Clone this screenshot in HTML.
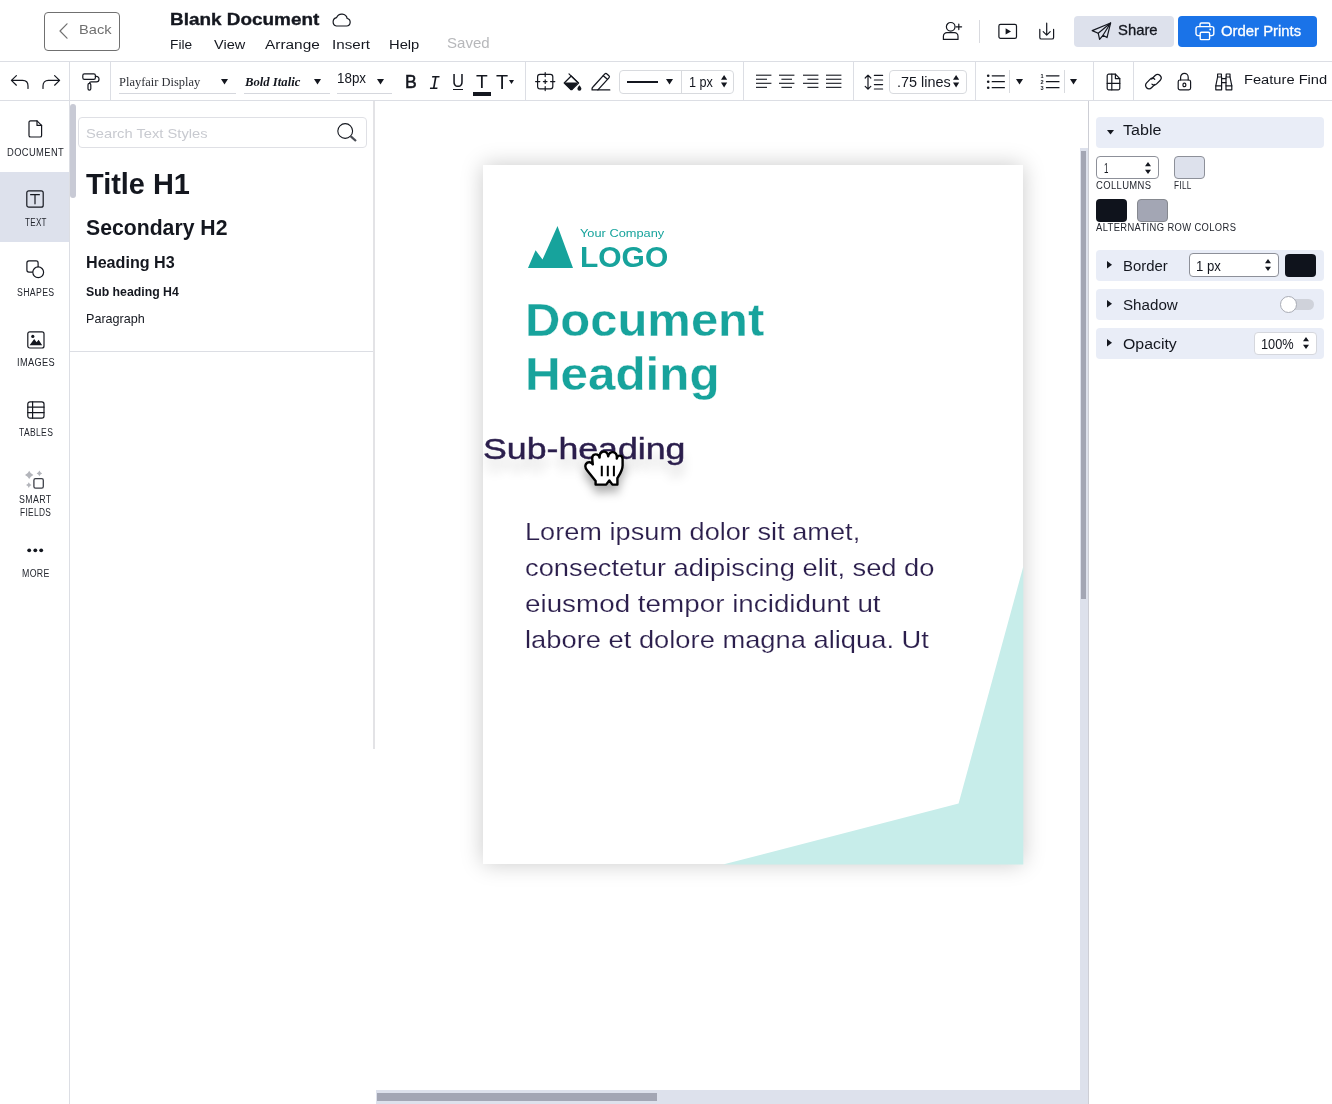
<!DOCTYPE html>
<html lang="en"><head><meta charset="utf-8"><title>Blank Document</title>
<style>
*{box-sizing:border-box;margin:0;padding:0}
html,body{width:1332px;height:1104px;overflow:hidden;background:#fff}
body{position:relative;font-family:"Liberation Sans",sans-serif;color:#14171f}
.t{position:absolute;white-space:nowrap;line-height:1;transform-origin:0 0;display:block}
#w{position:absolute;left:0;top:0;width:1332px;height:1104px;will-change:transform}
.a{position:absolute}
.ln{position:absolute;background:#dcdee4}
svg{position:absolute;overflow:visible}
.s{fill:none;stroke:#14171f;stroke-width:1.2;stroke-linecap:round;stroke-linejoin:round}
.f{fill:#14171f;stroke:none}
</style></head>
<body>
<div id="w">
<div class="ln" style="left:0px;top:61px;width:1332px;height:1px;background:#dcdee4"></div>
<div class="a" style="left:44px;top:12px;width:76px;height:39px;border:1px solid #707070;border-radius:4px"></div>
<svg style="left:59px;top:23px" width="9" height="16" viewBox="0 0 9 16"><path d="M8 0.8L1 8L8 15.2" fill="none" stroke="#707070" stroke-width="1.2" stroke-linecap="round" stroke-linejoin="round"/></svg>
<span class="t" id="t0" style='top:23px;font-size:13.2px;color:#707070;left:79.45px;transform:scaleX(1.1115);'>Back</span>
<span class="t" id="t1" style='top:11px;font-size:17px;color:#14171f;font-weight:700;left:169.82px;transform:scaleX(1.1129);-webkit-text-stroke:.35px #14171f;'>Blank Document</span>
<svg style="left:331.2px;top:12.4px" width="21" height="15" viewBox="0 0 21 15"><path class="s" d="M5.4 14H15.6A3.8 3.8 0 0 0 16.2 6.5A5.6 5.6 0 0 0 5.6 5.6A4.3 4.3 0 0 0 5.4 14Z" stroke-width="1.1"/></svg>
<span class="t" id="t2" style='top:38px;font-size:13.7px;color:#14171f;left:169.93px;transform:scaleX(1.0025);'>File</span>
<span class="t" id="t3" style='top:38px;font-size:13.7px;color:#14171f;left:214.00px;transform:scaleX(1.0603);'>View</span>
<span class="t" id="t4" style='top:38px;font-size:13.7px;color:#14171f;left:264.50px;transform:scaleX(1.1249);'>Arrange</span>
<span class="t" id="t5" style='top:38px;font-size:13.7px;color:#14171f;left:331.82px;transform:scaleX(1.1071);'>Insert</span>
<span class="t" id="t6" style='top:38px;font-size:13.7px;color:#14171f;left:388.85px;transform:scaleX(1.0772);'>Help</span>
<span class="t" id="t7" style='top:36px;font-size:14.2px;color:#b7b8bb;left:447.43px;transform:scaleX(1.0609);'>Saved</span>
<div class="ln" style="left:979px;top:20px;width:1px;height:23px;background:#d9dadf"></div>
<div class="a" style="left:1074px;top:16px;width:100px;height:31px;background:#dde1ec;border-radius:4px"></div>
<span class="t" id="t8" style='top:23px;font-size:14.5px;color:#14171f;left:1118.34px;transform:scaleX(1.0225);-webkit-text-stroke:.3px #14171f;'>Share</span>
<div class="a" style="left:1178px;top:16px;width:139px;height:31px;background:#1a73e8;border-radius:4px"></div>
<span class="t" id="t9" style='top:24px;font-size:14.5px;color:#fff;left:1221.40px;transform:scaleX(1.0257);-webkit-text-stroke:.3px #fff;'>Order Prints</span>
<svg style="left:942px;top:21px;" width="20" height="20" viewBox="0 0 20 20"><circle class="s" cx="8.7" cy="5.8" r="4.3"/><path class="s" d="M1.4 18.4V15.2A3.6 3.6 0 0 1 5 11.6H12.4A3.6 3.6 0 0 1 16 15.2V18.4Z"/><path class="s" d="M14 5.8H19.6M16.8 3V8.6" stroke-width="1.1"/></svg>
<svg style="left:998px;top:23px;" width="20" height="17" viewBox="0 0 20 17"><rect class="s" x="0.9" y="1.3" width="17.6" height="14" rx="1.6"/><path class="f" d="M7.6 5.3L13 8.4L7.6 11.6Z"/></svg>
<svg style="left:1038px;top:22px;" width="18" height="19" viewBox="0 0 18 19"><path class="s" d="M1.8 7.4V15.4A1.6 1.6 0 0 0 3.4 17H14A1.6 1.6 0 0 0 15.6 15.4V7.4"/><path class="s" d="M8.7 1.2V13M5.2 9.6L8.7 13.1L12.2 9.6" stroke-width="1.1"/></svg>
<svg style="left:1091px;top:22px;" width="21" height="19" viewBox="0 0 21 19"><path class="s" d="M19.6 1L1.2 8.6L7.2 11.2L8.6 17.4L12 13.3L16 15.6Z" stroke-width="1.2"/><path class="s" d="M19.6 1L7.2 11.2M19.6 1L12 13.3" stroke-width="1.1"/></svg>
<svg style="left:1195px;top:22px;" width="20" height="19" viewBox="0 0 20 19"><g fill="none" stroke="#fff" stroke-width="1.4" stroke-linejoin="round" stroke-linecap="round"><path d="M5 4.6V2.4A1.4 1.4 0 0 1 6.4 1H13.4A1.4 1.4 0 0 1 14.8 2.4V4.6"/><rect x="1" y="4.6" width="17.8" height="9" rx="2"/><rect x="5.2" y="10.2" width="9.4" height="7.4" rx="1.2" fill="#1a73e8"/></g><circle cx="15.2" cy="7.5" r="0.9" fill="#fff"/></svg>
<div class="ln" style="left:0px;top:100px;width:1332px;height:1px;background:#dcdee4"></div>
<div class="ln" style="left:69px;top:62px;width:1px;height:38px;background:#dcdee4"></div>
<div class="ln" style="left:110px;top:62px;width:1px;height:38px;background:#dcdee4"></div>
<div class="ln" style="left:525px;top:62px;width:1px;height:38px;background:#dcdee4"></div>
<div class="ln" style="left:743px;top:62px;width:1px;height:38px;background:#dcdee4"></div>
<div class="ln" style="left:853px;top:62px;width:1px;height:38px;background:#dcdee4"></div>
<div class="ln" style="left:975px;top:62px;width:1px;height:38px;background:#dcdee4"></div>
<div class="ln" style="left:1093px;top:62px;width:1px;height:38px;background:#dcdee4"></div>
<div class="ln" style="left:1133px;top:62px;width:1px;height:38px;background:#dcdee4"></div>
<svg style="left:10px;top:74px;" width="20" height="16" viewBox="0 0 20 16"><path class="s" d="M6.4 1.6L1.4 6.4L6.4 11.2M1.6 6.4H12.6C16 6.4 18 8.8 18 12V14.4" stroke-width="1.2"/></svg>
<svg style="left:41px;top:74px;" width="20" height="16" viewBox="0 0 20 16"><path class="s" d="M13.6 1.6L18.6 6.4L13.6 11.2M18.4 6.4H7.4C4 6.4 2 8.8 2 12V14.4" stroke-width="1.2"/></svg>
<svg style="left:82px;top:73px;" width="18" height="18" viewBox="0 0 18 18"><rect class="s" x="0.8" y="0.8" width="12.6" height="5.6" rx="1.6"/><path class="s" d="M13.4 3.4H14.4A2.6 2.6 0 0 1 17 6V6.2A2.6 2.6 0 0 1 14.4 8.8H9.2A1.8 1.8 0 0 0 7.4 10.4"/><rect class="s" x="6" y="10.4" width="2.8" height="6.8" rx="1.4"/></svg>
<svg style="left:535px;top:71.9px;" width="20" height="19" viewBox="0 0 20 19"><rect class="s" x="2.6" y="2.4" width="15.2" height="14.4" rx="2.4" stroke-width="1.2"/><path class="s" d="M10.2 0.6V4.6M10.2 14.6V18.6M0.6 9.6H4.8M15.6 9.6H19.8M8.4 9.6H12M10.2 7.8V11.4" stroke-width="1.1"/></svg>
<svg style="left:562.8px;top:72.6px;" width="19" height="18" viewBox="0 0 19 18"><path class="s" d="M6 0.8L14.6 9.4" stroke-width="1.2"/><path class="s" d="M8.2 3L1.2 10L7.4 16.2Q8.4 17 9.4 16.2L15.6 10Z" stroke-width="1.2"/><path class="f" d="M1.2 9.4H15.4L9.4 16.2Q8.4 17 7.4 16.2L1.2 10Z"/><path class="f" d="M16.4 12.2C17.6 13.8 18.4 14.8 18.4 15.8A2 2 0 0 1 14.4 15.8C14.4 14.8 15.2 13.8 16.4 12.2Z"/></svg>
<svg style="left:590.8px;top:72.4px;" width="20.5" height="19.4" viewBox="0 0 19 18"><path class="s" d="M2.4 13.2L12.8 1.8Q13.8 0.8 14.8 1.8L16.6 3.4Q17.6 4.4 16.6 5.4L6.4 16.6H1V15Z" stroke-width="1.2"/><path class="s" d="M11.4 3.4L15.2 6.8" stroke-width="1.1"/><path class="s" d="M6.4 16.6H17.4" stroke-width="1.2"/></svg>
<svg style="left:756px;top:74px;" width="16" height="15" viewBox="0 0 16 15"><path d="M0 1.2H15.4" stroke="#14171f" stroke-width="1.1" fill="none"/><path d="M0 5.25H11" stroke="#14171f" stroke-width="1.1" fill="none"/><path d="M0 9.299999999999999H15.4" stroke="#14171f" stroke-width="1.1" fill="none"/><path d="M0 13.349999999999998H11" stroke="#14171f" stroke-width="1.1" fill="none"/></svg>
<svg style="left:779.3px;top:74px;" width="16" height="15" viewBox="0 0 16 15"><path d="M0 1.2H15.4" stroke="#14171f" stroke-width="1.1" fill="none"/><path d="M2.4 5.25H13" stroke="#14171f" stroke-width="1.1" fill="none"/><path d="M0 9.299999999999999H15.4" stroke="#14171f" stroke-width="1.1" fill="none"/><path d="M2.4 13.349999999999998H13" stroke="#14171f" stroke-width="1.1" fill="none"/></svg>
<svg style="left:802.5px;top:74px;" width="16" height="15" viewBox="0 0 16 15"><path d="M0 1.2H15.4" stroke="#14171f" stroke-width="1.1" fill="none"/><path d="M4.4 5.25H15.4" stroke="#14171f" stroke-width="1.1" fill="none"/><path d="M0 9.299999999999999H15.4" stroke="#14171f" stroke-width="1.1" fill="none"/><path d="M4.4 13.349999999999998H15.4" stroke="#14171f" stroke-width="1.1" fill="none"/></svg>
<svg style="left:826px;top:74px;" width="16" height="15" viewBox="0 0 16 15"><path d="M0 1.2H15.4" stroke="#14171f" stroke-width="1.1" fill="none"/><path d="M0 5.25H15.4" stroke="#14171f" stroke-width="1.1" fill="none"/><path d="M0 9.299999999999999H15.4" stroke="#14171f" stroke-width="1.1" fill="none"/><path d="M0 13.349999999999998H15.4" stroke="#14171f" stroke-width="1.1" fill="none"/></svg>
<svg style="left:864px;top:74px;" width="20" height="17" viewBox="0 0 20 17"><path class="s" d="M4 1.2V15.2M1.2 4L4 1.2L6.8 4M1.2 12.4L4 15.2L6.8 12.4" stroke-width="1.1"/><path class="s" d="M10.4 1.4H18.6M10.4 6H18.6M10.4 10.6H18.6M10.4 15H18.6" stroke-width="1.1"/></svg>
<svg style="left:986px;top:73px;" width="19" height="17" viewBox="0 0 19 17"><circle class="f" cx="2.2" cy="2.8" r="1.3"/><circle class="f" cx="2.2" cy="8.7" r="1.3"/><circle class="f" cx="2.2" cy="14.7" r="1.3"/><path class="s" d="M6.2 2.8H18.4M6.2 8.7H18.4M6.2 14.7H18.4" stroke-width="1.1"/></svg>
<svg style="left:1040px;top:73px;" width="20" height="17" viewBox="0 0 20 17"><text x="0.6" y="4.8" font-size="5.6" font-weight="700" font-family="Liberation Sans, sans-serif" fill="#14171f">1</text><text x="0.6" y="10.7" font-size="5.6" font-weight="700" font-family="Liberation Sans, sans-serif" fill="#14171f">2</text><text x="0.6" y="16.7" font-size="5.6" font-weight="700" font-family="Liberation Sans, sans-serif" fill="#14171f">3</text><path class="s" d="M6.4 2.8H19M6.4 8.7H19M6.4 14.7H19" stroke-width="1.1"/></svg>
<svg style="left:1106px;top:73px;" width="16" height="18" viewBox="0 0 16 18"><path class="s" d="M2.8 1.2H9.4L13.8 5.6V15.2A1.6 1.6 0 0 1 12.2 16.8H2.8A1.6 1.6 0 0 1 1.2 15.2V2.8A1.6 1.6 0 0 1 2.8 1.2Z" stroke-width="1.2"/><path class="s" d="M9.4 1.2V5.6H13.8M5.8 1.2V16.8M1.2 10.4H13.8" stroke-width="1.1"/></svg>
<svg style="left:1144.4px;top:73.3px;" width="19.3" height="18.2" viewBox="0 0 18 17"><g class="s" stroke-width="1.2"><path d="M7.2 5.6L10.4 2.4A3.2 3.2 0 0 1 15 7L11.8 10.2A3.2 3.2 0 0 1 7.4 10.4"/><path d="M10.2 10.6L7 13.8A3.2 3.2 0 0 1 2.4 9.2L5.6 6A3.2 3.2 0 0 1 10 5.8"/></g></svg>
<svg style="left:1176.8px;top:71.7px;" width="15" height="19" viewBox="0 0 15 19"><rect class="s" x="1.2" y="8" width="12.4" height="9.8" rx="1.8" stroke-width="1.2"/><path class="s" d="M3.6 8V5.2A3.8 3.8 0 0 1 11.2 5.2V8" stroke-width="1.2"/><rect class="s" x="6" y="11.2" width="2.8" height="3.4" rx="1.2" stroke-width="1"/></svg>
<svg style="left:1215px;top:73px;" width="18" height="18" viewBox="0 0 18 18"><g class="s" stroke-width="1.2"><path d="M2.6 1H6.4V4H2.6Z M11.2 1H15V4H11.2Z"/><path d="M2.6 4L0.8 12.8V16.8H6.6V4 M15 4L16.8 12.8V16.8H11V4"/><path d="M0.8 12.8H6.6M11 12.8H16.8M6.6 5.6H11M6.6 9.6H11"/></g></svg>
<span class="t" id="t10" style='top:76px;font-size:12.2px;color:#2e3036;font-family:"Liberation Serif", serif;left:118.94px;transform:scaleX(1.0218);'>Playfair Display</span>
<svg style="left:220.6px;top:79.2px" width="7" height="5.5" viewBox="0 0 7 5.5"><path d="M0 0H7L3.5 5.5Z" fill="#14171f"/></svg>
<div class="ln" style="left:119px;top:93px;width:117px;height:1px;background:#d5d7dd"></div>
<span class="t" id="t11" style='top:75px;font-size:13.2px;color:#14171f;font-weight:700;font-family:"Liberation Serif", serif;font-style:italic;left:244.50px;transform:scaleX(0.9620);'>Bold Italic</span>
<svg style="left:314.1px;top:79.2px" width="7" height="5.5" viewBox="0 0 7 5.5"><path d="M0 0H7L3.5 5.5Z" fill="#14171f"/></svg>
<div class="ln" style="left:244px;top:93px;width:86px;height:1px;background:#d5d7dd"></div>
<span class="t" id="t12" style='top:71px;font-size:14px;color:#14171f;left:336.96px;transform:scaleX(0.9565);'>18px</span>
<svg style="left:376.6px;top:79.2px" width="7" height="5.5" viewBox="0 0 7 5.5"><path d="M0 0H7L3.5 5.5Z" fill="#14171f"/></svg>
<div class="ln" style="left:337px;top:93px;width:55px;height:1px;background:#d5d7dd"></div>
<span class="t" id="t13" style='top:73px;font-size:18.4px;color:#14171f;left:405.23px;transform:scaleX(0.9540);-webkit-text-stroke:.55px #14171f;'>B</span>
<span class="t" id="t14" style='top:73px;font-size:21px;color:#14171f;font-family:"Liberation Mono", monospace;font-style:italic;left:429.14px;transform:scaleX(0.8784);'>I</span>
<span class="t" id="t15" style='top:72px;font-size:18.6px;color:#14171f;left:452.16px;transform:scaleX(0.8964);'>U</span>
<div class="ln" style="left:453.2px;top:88.6px;width:9.900000000000034px;height:1.2px;background:#14171f"></div>
<span class="t" id="t16" style='top:72px;font-size:19px;color:#14171f;left:476.00px;transform:scaleX(1.0105);'>T</span>
<div class="ln" style="left:473.1px;top:92px;width:17.599999999999966px;height:3.5px;background:#14171f"></div>
<span class="t" id="t17" style='top:73px;font-size:19.6px;color:#14171f;left:495.99px;transform:scaleX(1.0149);'>T</span>
<svg style="left:509px;top:80.1px" width="5" height="3.9" viewBox="0 0 5 3.9"><path d="M0 0H5L2.5 3.9Z" fill="#14171f"/></svg>
<div class="a" style="left:619.4px;top:70px;width:115px;height:23.5px;border:1px solid #d8dade;border-radius:4px"></div>
<div class="ln" style="left:681px;top:70.5px;width:1px;height:22.5px;background:#d8dade"></div>
<div class="ln" style="left:627px;top:81px;width:31px;height:1.5px;background:#14171f"></div>
<svg style="left:666px;top:79.2px" width="7" height="5.5" viewBox="0 0 7 5.5"><path d="M0 0H7L3.5 5.5Z" fill="#14171f"/></svg>
<span class="t" id="t18" style='top:75px;font-size:14px;color:#14171f;left:688.51px;transform:scaleX(0.9028);'>1 px</span>
<svg style="left:720.6px;top:75.4px" width="6.2" height="12.4" viewBox="0 0 6.2 12.4"><path d="M0 4.8H6.2L3.1 0Z M0 7.6H6.2L3.1 12.4Z" fill="#14171f"/></svg>
<div class="a" style="left:889px;top:70px;width:78px;height:23.5px;border:1px solid #d8dade;border-radius:4px"></div>
<span class="t" id="t19" style='top:75px;font-size:14px;color:#14171f;left:896.67px;transform:scaleX(1.0294);'>.75 lines</span>
<svg style="left:953.2px;top:75.4px" width="6.2" height="12.4" viewBox="0 0 6.2 12.4"><path d="M0 4.8H6.2L3.1 0Z M0 7.6H6.2L3.1 12.4Z" fill="#14171f"/></svg>
<div class="ln" style="left:1009px;top:70px;width:1px;height:23px;background:#d8dade"></div>
<svg style="left:1015.6px;top:79.2px" width="7" height="5.5" viewBox="0 0 7 5.5"><path d="M0 0H7L3.5 5.5Z" fill="#14171f"/></svg>
<div class="ln" style="left:1064px;top:70px;width:1px;height:23px;background:#d8dade"></div>
<svg style="left:1070.1px;top:79.2px" width="7" height="5.5" viewBox="0 0 7 5.5"><path d="M0 0H7L3.5 5.5Z" fill="#14171f"/></svg>
<span class="t" id="t20" style='top:73px;font-size:13.7px;color:#14171f;left:1243.65px;transform:scaleX(1.0721);'>Feature Find</span>
<div class="ln" style="left:69px;top:101px;width:1px;height:1003px;background:#dcdee4"></div>
<div class="a" style="left:0px;top:172px;width:69px;height:70px;background:#dde1ec"></div>
<svg style="left:28.1px;top:120px;" width="15" height="18" viewBox="0 0 15 18"><path class="s" d="M2.6 0.8H9L13.6 5.4V15.4A1.6 1.6 0 0 1 12 17H2.6A1.6 1.6 0 0 1 1 15.4V2.4A1.6 1.6 0 0 1 2.6 0.8Z" stroke-width="1.2"/><path class="s" d="M9 0.8V5.4H13.6" stroke-width="1.1"/></svg>
<svg style="left:26.4px;top:190px;" width="18" height="18" viewBox="0 0 18 18"><rect class="s" x="0.8" y="0.8" width="16.4" height="16.4" rx="2" stroke-width="1.2"/><path class="s" d="M4.6 4.7H13.4M9 4.7V13.8" stroke-width="1.2"/></svg>
<svg style="left:26.1px;top:260px;" width="19" height="19" viewBox="0 0 19 19"><rect class="s" x="0.9" y="0.9" width="11.2" height="11.2" rx="2" stroke-width="1.2"/><circle cx="12.2" cy="12.3" r="5.4" fill="#fff" stroke="#14171f" stroke-width="1.2"/></svg>
<svg style="left:26.6px;top:330.5px;" width="18" height="18" viewBox="0 0 18 18"><rect class="s" x="0.8" y="0.8" width="16.2" height="16.2" rx="2" stroke-width="1.2"/><circle class="f" cx="5.8" cy="5.4" r="1.6"/><path class="f" d="M2.6 14.2L7.2 8L9.6 11.2L11.6 8.8L15.2 14.2Z"/></svg>
<svg style="left:26.6px;top:400.8px;" width="18" height="18" viewBox="0 0 18 18"><rect class="s" x="0.8" y="0.8" width="16.2" height="16.4" rx="2.2" stroke-width="1.2"/><path class="s" d="M0.8 6.2H17M0.8 11.6H17M5.6 0.8V17.2" stroke-width="1.1"/></svg>
<svg style="left:24.1px;top:469px;" width="22" height="21" viewBox="0 0 22 21"><path d="M5.2 1.7000000000000002Q6.376 4.724 9.4 5.9Q6.376 7.0760000000000005 5.2 10.100000000000001Q4.024 7.0760000000000005 1.0 5.9Q4.024 4.724 5.2 1.7000000000000002Z" fill="#b3b5bb"/><path d="M15.4 1.6000000000000005Q16.184 3.6160000000000005 18.2 4.4Q16.184 5.184 15.4 7.2Q14.616 5.184 12.600000000000001 4.4Q14.616 3.6160000000000005 15.4 1.6000000000000005Z" fill="#b3b5bb"/><path d="M4.8 13.3Q5.584 15.316 7.6 16.1Q5.584 16.884 4.8 18.900000000000002Q4.016 16.884 2.0 16.1Q4.016 15.316 4.8 13.3Z" fill="#b3b5bb"/><rect x="9.9" y="9.7" width="9.4" height="9.4" rx="1.6" fill="none" stroke="#3c3f47" stroke-width="1.3"/></svg>
<svg style="left:27.1px;top:548px;" width="17" height="5" viewBox="0 0 17 5"><circle class="f" cx="2.2" cy="2.3" r="1.9"/><circle class="f" cx="8.3" cy="2.3" r="1.9"/><circle class="f" cx="14.2" cy="2.3" r="1.9"/></svg>
<span class="t" id="t21" style='top:148px;font-size:10px;color:#23262e;letter-spacing:0.4px;left:6.95px;transform:scaleX(0.9368);'>DOCUMENT</span>
<span class="t" id="t22" style='top:218px;font-size:10px;color:#23262e;letter-spacing:0.4px;left:24.84px;transform:scaleX(0.8046);'>TEXT</span>
<span class="t" id="t23" style='top:288px;font-size:10px;color:#23262e;letter-spacing:0.4px;left:17.01px;transform:scaleX(0.8729);'>SHAPES</span>
<span class="t" id="t24" style='top:358px;font-size:10px;color:#23262e;letter-spacing:0.4px;left:16.52px;transform:scaleX(0.9223);'>IMAGES</span>
<span class="t" id="t25" style='top:428px;font-size:10px;color:#23262e;letter-spacing:0.4px;left:18.78px;transform:scaleX(0.8541);'>TABLES</span>
<span class="t" id="t26" style='top:495px;font-size:10px;color:#23262e;letter-spacing:0.4px;left:19.45px;transform:scaleX(0.8808);'>SMART</span>
<span class="t" id="t27" style='top:508px;font-size:10px;color:#23262e;letter-spacing:0.4px;left:20.03px;transform:scaleX(0.8326);'>FIELDS</span>
<span class="t" id="t28" style='top:569px;font-size:10px;color:#23262e;letter-spacing:0.4px;left:21.75px;transform:scaleX(0.8772);'>MORE</span>
<div class="a" style="left:69.8px;top:103.6px;width:6.2px;height:94.8px;background:#c8cad5;border-radius:3px"></div>
<div class="a" style="left:78.4px;top:117.2px;width:289px;height:30.6px;border:1px solid #dfe0e5;border-radius:4px"></div>
<span class="t" id="t29" style='top:127px;font-size:13.6px;color:#c8cad0;left:85.84px;transform:scaleX(1.0825);'>Search Text Styles</span>
<svg style="left:337px;top:123px" width="21" height="20" viewBox="0 0 21 20"><circle cx="8.2" cy="8" r="7.4" fill="none" stroke="#14171f" stroke-width="1.1"/><path d="M13.8 13.4L19 18" stroke="#4a4d55" stroke-width="2.2" stroke-linecap="butt" fill="none"/></svg>
<span class="t" id="t30" style='top:169px;font-size:29.8px;color:#14171f;font-weight:700;left:85.80px;transform:scaleX(0.9704);'>Title H1</span>
<span class="t" id="t31" style='top:217px;font-size:22.6px;color:#14171f;font-weight:700;left:86.17px;transform:scaleX(0.9385);'>Secondary H2</span>
<span class="t" id="t32" style='top:255px;font-size:16.8px;color:#14171f;font-weight:700;left:85.59px;transform:scaleX(0.9610);'>Heading H3</span>
<span class="t" id="t33" style='top:285px;font-size:13.2px;color:#14171f;font-weight:700;left:86.21px;transform:scaleX(0.9305);'>Sub heading H4</span>
<span class="t" id="t34" style='top:312px;font-size:13.2px;color:#14171f;left:85.61px;transform:scaleX(0.9554);'>Paragraph</span>
<div class="ln" style="left:70px;top:351px;width:304px;height:1px;background:#dcdee4"></div>
<div class="ln" style="left:373px;top:101px;width:2px;height:648px;background:#e3e3e6"></div>
<div class="a" style="left:1080px;top:148px;width:8px;height:956px;background:#dde1ec"></div>
<div class="a" style="left:1081.3px;top:151px;width:5.2px;height:448px;background:#a3a6b4"></div>
<div class="a" style="left:376px;top:1090px;width:704px;height:14px;background:#dde1ec"></div>
<div class="a" style="left:377px;top:1092.5px;width:279.5px;height:8px;background:#a3a6b4"></div>
<div class="ln" style="left:1088px;top:101px;width:1px;height:1003px;background:#cdced5"></div>
<div class="a" style="left:483px;top:164.5px;width:540.3px;height:699.5px;background:#fff;box-shadow:0 0 21px rgba(0,0,0,.21)"></div>
<svg style="left:483px;top:164.5px" width="540.3" height="699.5" viewBox="0 0 540.3 699.5"><path d="M540.3 401.5L475.6 638.6L240 699.5H540.3Z" fill="#c7edea"/></svg>
<svg style="left:528px;top:226.5px" width="45" height="41" viewBox="0 0 45 41"><path d="M0 41L7.6 23.2L14.5 32.6L29.5 -0.9L45 41Z" fill="#17a39c"/></svg>
<span class="t" id="t35" style='top:227px;font-size:11.7px;color:#17a39c;left:579.73px;transform:scaleX(1.0950);'>Your Company</span>
<span class="t" id="t36" style='top:241px;font-size:30.4px;color:#17a39c;font-weight:700;left:579.93px;transform:scaleX(0.9855);'>LOGO</span>
<span class="t" id="t37" style='top:297px;font-size:46px;color:#17a39c;font-weight:700;left:524.94px;transform:scaleX(1.0640);-webkit-text-stroke:.3px #fff;'>Document</span>
<span class="t" id="t38" style='top:351px;font-size:46px;color:#17a39c;font-weight:700;left:524.92px;transform:scaleX(1.0721);-webkit-text-stroke:.3px #fff;'>Heading</span>
<span class="t" id="t39" style='top:434px;font-size:29.6px;color:#2b1e4c;left:483.28px;transform:scaleX(1.2064);text-shadow:0 12px 10px rgba(0,0,0,.17);-webkit-text-stroke:.45px #2b1e4c;'>Sub-heading</span>
<span class="t" id="t40" style='top:520px;font-size:24.6px;color:#2b1e4c;left:524.68px;transform:scaleX(1.1046);-webkit-text-stroke:.17px #fff;'>Lorem ipsum dolor sit amet,</span>
<span class="t" id="t41" style='top:556px;font-size:24.6px;color:#2b1e4c;left:525.15px;transform:scaleX(1.1093);-webkit-text-stroke:.17px #fff;'>consectetur adipiscing elit, sed do</span>
<span class="t" id="t42" style='top:592px;font-size:24.6px;color:#2b1e4c;left:525.13px;transform:scaleX(1.1309);-webkit-text-stroke:.17px #fff;'>eiusmod tempor incididunt ut</span>
<span class="t" id="t43" style='top:628px;font-size:24.6px;color:#2b1e4c;left:524.79px;transform:scaleX(1.1107);-webkit-text-stroke:.17px #fff;'>labore et dolore magna aliqua. Ut</span>
<svg style="left:583.8px;top:449.8px;filter:drop-shadow(0 7px 5px rgba(0,0,0,.32));" width="40" height="36" viewBox="0 0 40 36"><path d="M8.8 14.4C7.4 11.8 3.6 11.4 2 14C0.8 16 1.6 18.6 3.2 20.6L11.6 31V34.6H22.2L25.3 30.4L28.4 34.6H33.4V28.2C35.4 24.6 38.6 20.4 38.6 15.4V9.2C38.6 4.6 33.4 4.6 32.8 8.6C33.6 0.6 25 0.2 24.2 6.4C23.6 -0.6 15.4 0.4 15.6 7.6C14.4 3 8 3.4 8.2 8.6Z" fill="#fff" stroke="#000" stroke-width="2.4" stroke-linejoin="round"/><path d="M17.8 15.8V26.2M23.8 15.8V26.2M29.9 15.8V26.2" stroke="#000" stroke-width="2" fill="none"/></svg>
<div class="a" style="left:1096px;top:117px;width:228.3px;height:30.7px;background:#e9edf7;border-radius:4px"></div>
<svg style="left:1106.5px;top:130px" width="7" height="4.5" viewBox="0 0 7 4.5"><path d="M0 0H7L3.5 4.5Z" fill="#14171f"/></svg>
<span class="t" id="t44" style='top:123px;font-size:14px;color:#14171f;left:1123.25px;transform:scaleX(1.1474);'>Table</span>
<div class="a" style="left:1096px;top:156.3px;width:62.6px;height:23.2px;border:1px solid #8d9099;border-radius:4px;background:#fff"></div>
<span class="t" id="t45" style='top:161px;font-size:14px;color:#14171f;left:1103.80px;transform:scaleX(0.5675);'>1</span>
<svg style="left:1145.2px;top:161.8px" width="6" height="12.0" viewBox="0 0 6 12.0"><path d="M0 4.3H6L3.0 0Z M0 7.699999999999999H6L3.0 12.0Z" fill="#14171f"/></svg>
<div class="a" style="left:1174.3px;top:156.3px;width:30.8px;height:23.2px;border:1px solid #8d9099;border-radius:4px;background:#dde1ec"></div>
<span class="t" id="t46" style='top:181px;font-size:10px;color:#23262e;letter-spacing:0.4px;left:1095.83px;transform:scaleX(0.9435);'>COLLUMNS</span>
<span class="t" id="t47" style='top:181px;font-size:10px;color:#23262e;letter-spacing:0.4px;left:1173.84px;transform:scaleX(0.8210);'>FILL</span>
<div class="a" style="left:1096px;top:199.3px;width:31px;height:22.5px;background:#0f131c;border-radius:4px"></div>
<div class="a" style="left:1137.3px;top:199.3px;width:31px;height:22.5px;background:#a3a6b4;border:1px solid #85888f;border-radius:4px"></div>
<span class="t" id="t48" style='top:223px;font-size:10px;color:#23262e;letter-spacing:0.4px;left:1096.30px;transform:scaleX(0.9379);'>ALTERNATING ROW COLORS</span>
<div class="a" style="left:1096px;top:250px;width:228.3px;height:30.6px;background:#e9edf7;border-radius:4px"></div>
<svg style="left:1107px;top:261.3px" width="5" height="7.5" viewBox="0 0 5 7.5"><path d="M0 0V7.5L5 3.75Z" fill="#14171f"/></svg>
<span class="t" id="t49" style='top:259px;font-size:14px;color:#14171f;left:1123.44px;transform:scaleX(1.0622);'>Border</span>
<div class="a" style="left:1189px;top:253.4px;width:90.2px;height:24px;border:1px solid #8d9099;border-radius:4px;background:#fff"></div>
<span class="t" id="t50" style='top:259px;font-size:14px;color:#14171f;left:1195.78px;transform:scaleX(0.9380);'>1 px</span>
<svg style="left:1264.6px;top:259.3px" width="6" height="12.0" viewBox="0 0 6 12.0"><path d="M0 4.3H6L3.0 0Z M0 7.699999999999999H6L3.0 12.0Z" fill="#14171f"/></svg>
<div class="a" style="left:1285.4px;top:253.7px;width:31px;height:23.4px;background:#0f131c;border-radius:4px"></div>
<div class="a" style="left:1096px;top:288.9px;width:228.3px;height:30.7px;background:#e9edf7;border-radius:4px"></div>
<svg style="left:1107px;top:300.3px" width="5" height="7.5" viewBox="0 0 5 7.5"><path d="M0 0V7.5L5 3.75Z" fill="#14171f"/></svg>
<span class="t" id="t51" style='top:298px;font-size:14px;color:#14171f;left:1123.03px;transform:scaleX(1.0829);'>Shadow</span>
<div class="a" style="left:1283px;top:298.8px;width:30.5px;height:11.2px;background:#cfd2da;border-radius:6px"></div>
<div class="a" style="left:1280.3px;top:295.8px;width:17.2px;height:17.2px;background:#fff;border:1px solid #a9acb5;border-radius:50%"></div>
<div class="a" style="left:1096px;top:328.2px;width:228.3px;height:30.5px;background:#e9edf7;border-radius:4px"></div>
<svg style="left:1107px;top:339.3px" width="5" height="7.5" viewBox="0 0 5 7.5"><path d="M0 0V7.5L5 3.75Z" fill="#14171f"/></svg>
<span class="t" id="t52" style='top:337px;font-size:14px;color:#14171f;left:1122.76px;transform:scaleX(1.1323);'>Opacity</span>
<div class="a" style="left:1254.4px;top:331.8px;width:63px;height:23.4px;border:1px solid #d5d7dd;border-radius:4px;background:#fff"></div>
<span class="t" id="t53" style='top:337px;font-size:14px;color:#14171f;left:1261.00px;transform:scaleX(0.9127);'>100%</span>
<svg style="left:1303.2px;top:337.4px" width="6" height="12.0" viewBox="0 0 6 12.0"><path d="M0 4.3H6L3.0 0Z M0 7.699999999999999H6L3.0 12.0Z" fill="#14171f"/></svg>
</div>
</body></html>
